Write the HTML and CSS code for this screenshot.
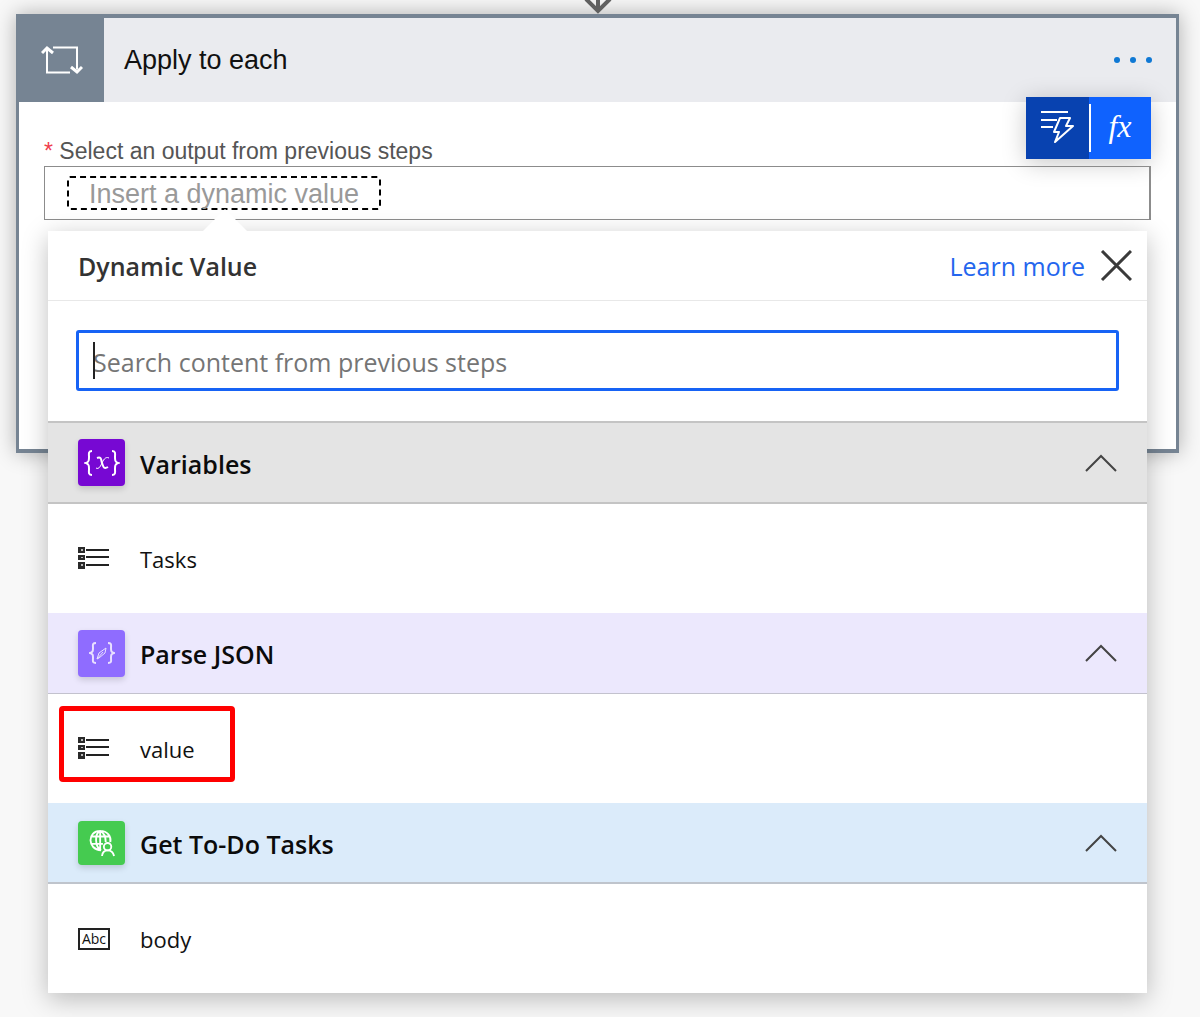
FILE: index.html
```html
<!DOCTYPE html>
<html lang="en">
<head>
<meta charset="utf-8">
<meta name="viewport" content="width=device-width, initial-scale=1">
<title>Apply to each</title>
<link rel="stylesheet" href="styles.css">
</head>
<body>
<svg width="0" height="0" class="sprite" aria-hidden="true">
  <symbol id="chevron" viewBox="0 0 32 18"><path d="M1 17 16 2l15 15" fill="none" stroke="#444" stroke-width="2"/></symbol>
  <symbol id="list" viewBox="0 0 32 24">
    <path d="M0 0h7v6H0zM0 8h7v5H0zM0 15h7v7H0z" fill="#2a2a2a"/>
    <path d="M3 2h2v2H3zM3 10h2v1H3zM3 17h2v2H3z" fill="#bbb"/>
    <path d="M8 3h23M8 10h23M8 18h23" stroke="#222" stroke-width="2"/>
  </symbol>
</svg>
<main class="canvas">
  <div class="connector">
    <svg width="28" height="14" viewBox="0 0 28 14" fill="none" stroke="#606060" stroke-width="4" aria-hidden="true"><path d="M14 0v10M2 -1l12 12L26 -1"/></svg>
  </div>
  <section class="card">
    <header class="card-header">
      <div class="card-icon">
        <svg width="42" height="30" viewBox="0 0 42 30" fill="none" stroke="#fff" stroke-width="2" aria-hidden="true">
          <path d="M12 2.500h24v22M29 27.500H6V5"/>
          <path d="M1 8l5-5 6 5M30 22l6 5 5-5" stroke-width="3"/>
        </svg>
      </div>
      <h1 class="card-title">Apply to each</h1>
      <button class="more" type="button" aria-label="More options"><i></i><i></i><i></i></button>
    </header>
    <div class="card-body">
      <div class="token-switch">
        <button class="switch-dynamic" type="button" aria-label="Dynamic value">
          <svg width="34" height="34" viewBox="0 0 34 34" fill="none" stroke="#fff" stroke-width="2" aria-hidden="true">
            <path d="M0 2h27M0 10h16M0 17h12"/>
            <path d="M19 8h10l-4 8h7L14 32l4-10h-5z" stroke-linejoin="round"/>
          </svg>
        </button>
        <button class="switch-expression" type="button">fx</button>
      </div>
      <div class="field-label" id="output-label"><span class="required">*</span> Select an output from previous steps</div>
      <div class="field" role="group" aria-labelledby="output-label">
        <button class="token" type="button">Insert a dynamic value</button>
        <div class="picker">
          <div class="picker-header">
            <h2 class="picker-title">Dynamic Value</h2>
            <a class="learn" href="#learn">Learn more</a>
            <button class="close" type="button" aria-label="Close">
              <svg width="32" height="32" viewBox="0 0 32 32" fill="none" stroke="#3a3a3a" stroke-width="3" aria-hidden="true"><path d="M2 1l29 29M31 1 2 30"/></svg>
            </button>
          </div>
          <div class="search">
            <input class="search-input" type="text" aria-label="Search" placeholder="Search content from previous steps">
            <span class="caret"></span>
          </div>

          <button class="group variables" type="button">
            <span class="group-icon">
              <svg width="36" height="28" viewBox="0 0 36 28" fill="none" stroke="#fff" stroke-width="2" aria-hidden="true">
                <path d="M8 2C4 2 5 5 5 8s0 5-3 6c3 1 3 3 3 6s-1 6 3 6M28 2c4 0 3 3 3 6s0 5 3 6c-3 1-3 3-3 6s1 6-3 6"/>
                <path d="M13 9c5-2 4 3 5 5s1 7 6 4" />
                <path d="M25 9c-4-2-6 3-7 5s-3 7-6 5" stroke-width="1"/>
              </svg>
            </span>
            <span class="group-name">Variables</span>
            <svg class="chevron" aria-hidden="true"><use href="#chevron"/></svg>
          </button>
          <button class="item" type="button"><svg class="item-icon" aria-hidden="true"><use href="#list"/></svg>Tasks</button>

          <button class="group parse" type="button">
            <span class="group-icon">
              <svg width="26" height="24" viewBox="0 0 26 24" fill="none" stroke="#e9e0ff" stroke-width="2" aria-hidden="true">
                <path d="M7 2C3 2 4 4 4 7s0 4-3 5c3 1 3 2 3 5s-1 5 3 5M19 2c4 0 3 2 3 5s0 4 3 5c-3 1-3 2-3 5s1 5-3 5"/>
                <path d="M8 18l2-6 7-5-1 5-6 5zM8 18l6-7" stroke-width="1"/>
              </svg>
            </span>
            <span class="group-name">Parse JSON</span>
            <svg class="chevron" aria-hidden="true"><use href="#chevron"/></svg>
          </button>
          <button class="item marked" type="button"><svg class="item-icon" aria-hidden="true"><use href="#list"/></svg>value</button>

          <button class="group http" type="button">
            <span class="group-icon">
              <svg width="26" height="28" viewBox="0 0 28 30" fill="none" stroke="#fff" stroke-width="2" aria-hidden="true">
                <path d="M13 23C-2 22-2 2 12 2c8 0 12 6 11 12M13 23c-7-4-7-18-1-21 4 2 6 7 6 12M12 2v20M2 8h20M2 16h13"/>
                <circle cx="20" cy="19" r="4"/><path d="M14 29c1-8 11-8 13 0"/>
              </svg>
            </span>
            <span class="group-name">Get To-Do Tasks</span>
            <svg class="chevron" aria-hidden="true"><use href="#chevron"/></svg>
          </button>
          <button class="item" type="button"><span class="abc">Abc</span>body</button>
        </div>
      </div>
    </div>
  </section>
</main>
</body>
</html>
```
FILE: styles.css
```css
*, *::before, *::after { box-sizing: border-box; }
body {
  margin: 0;
  background: #f8f8f8;
  font-family: "Liberation Sans", Arial, sans-serif;
}
button { margin: 0; border: 0; padding: 0; background: none; color: inherit; font: inherit; text-align: left; }
h1, h2 { margin: 0; }
svg { display: block; flex: none; }
.sprite { position: absolute; }

.canvas { min-height: 100vh; padding: 0 21px 0 16px; }
.connector { display: flex; justify-content: center; height: 14px; }

.card {
  min-height: 439px;
  border: solid #768493;
  border-width: 4px 3px;
  background: #fff;
  box-shadow: 0 0 20px rgba(0, 0, 0, 0.3);
}
.card-header { display: flex; align-items: center; height: 84px; background: #eaebef; padding-right: 24px; }
.card-icon { display: flex; align-items: center; justify-content: center; width: 85px; height: 100%; background: #768493; }
.card-title { flex: 1; padding-left: 20px; font-size: 27px; font-weight: 400; color: #111; }
.more { display: flex; gap: 10px; }
.more i { width: 6px; height: 6px; border-radius: 50%; background: #0f78d4; }

.card-body { position: relative; padding: 34px 25px 0; }
.token-switch {
  position: absolute;
  top: -5px;
  right: 25px;
  display: flex;
  height: 62px;
  background: #0f62fe;
  color: #fff;
  box-shadow: 0 4px 24px rgba(0, 0, 0, 0.22);
}
.token-switch button { display: flex; align-items: center; justify-content: center; padding-bottom: 2px; }
.switch-dynamic { width: 63px; background: #0842b0; }
.token-switch .switch-expression { width: 62px; padding-bottom: 4px; font: italic 32px "Liberation Serif", serif; }
.switch-expression::before { content: ""; position: absolute; left: 63px; top: 7px; width: 2px; height: 48px; background: #fff; }

.field-label { height: 30px; font-size: 23px; line-height: 30px; color: #555; }
.required { color: #f03e4e; }
.field {
  position: relative;
  display: flex;
  align-items: center;
  height: 54px;
  border: solid #8c8c8c;
  border-width: 1px 2px 1px 1px;
  padding-left: 22px;
}
.token { height: 34px; border: 2px dashed #000; border-radius: 3px; padding: 0 20px; font-size: 27px; line-height: 32px; color: #999; }

.picker {
  position: absolute;
  top: 64px;
  left: 3px;
  right: 2px;
  background: #fff;
  color: #111;
  font-family: "Open Sans", "Noto Sans", sans-serif;
  box-shadow: 0 6px 24px rgba(0, 0, 0, 0.25);
}
.picker::before {
  content: "";
  position: absolute;
  left: 155px;
  top: -22px;
  width: 44px;
  height: 22px;
  background: #fff;
  clip-path: polygon(50% 0, 100% 100%, 0 100%);
}
.picker-header { display: flex; align-items: center; height: 70px; border-bottom: 1px solid #e8e8e8; padding: 0 15px 0 30px; }
.picker-title { flex: 1; font-size: 25px; font-weight: 600; color: #333; }
.learn { margin-right: 15px; font-size: 25px; color: #2466ee; text-decoration: none; }

.search { position: relative; padding: 29px 28px 30px; }
.search-input {
  display: block;
  width: 100%;
  height: 61px;
  border: 3px solid #1763f5;
  border-radius: 3px;
  padding: 2px 14px 0;
  outline: 0;
  font: 25px "Open Sans", "Noto Sans", sans-serif;
}
.search-input::placeholder { color: #757575; opacity: 1; }
.caret { position: absolute; left: 45px; top: 41px; width: 2px; height: 37px; background: #222; }

.group { display: flex; align-items: center; width: 100%; height: 81px; border-bottom: 1px solid #c3c2ce; padding: 0 30px; }
.group-icon { display: flex; align-items: center; justify-content: center; width: 47px; height: 47px; border-radius: 4px; box-shadow: 0 3px 6px rgba(0, 0, 0, 0.15); }
.group-name { flex: 1; padding: 2px 0 0 15px; font-size: 25px; font-weight: 600; color: #0b0b0b; }
.chevron { width: 32px; height: 18px; }
.variables { height: 83px; border: solid #c4c4c4; border-width: 2px 0; background: #e4e4e4; }
.variables .group-icon { background: #7708d3; }
.parse { background: #ece8fd; }
.parse .group-icon { background: #8f6cff; }
.http { border-bottom: 2px solid #bfc4cc; background: #dbebfa; }
.http .group-icon { height: 44px; background: #45cb50; }

.item { position: relative; display: flex; align-items: center; gap: 30px; width: 100%; height: 109px; font-size: 22px; padding: 0 30px; }
.item-icon { width: 32px; height: 24px; }
.abc { width: 32px; height: 22px; border: 2px solid #222; font-size: 14px; line-height: 17px; text-align: center; }
.marked::after {
  content: "";
  position: absolute;
  left: 11px;
  top: 12px;
  width: 176px;
  height: 76px;
  border: 5px solid #f00;
  border-radius: 4px;
}
```
